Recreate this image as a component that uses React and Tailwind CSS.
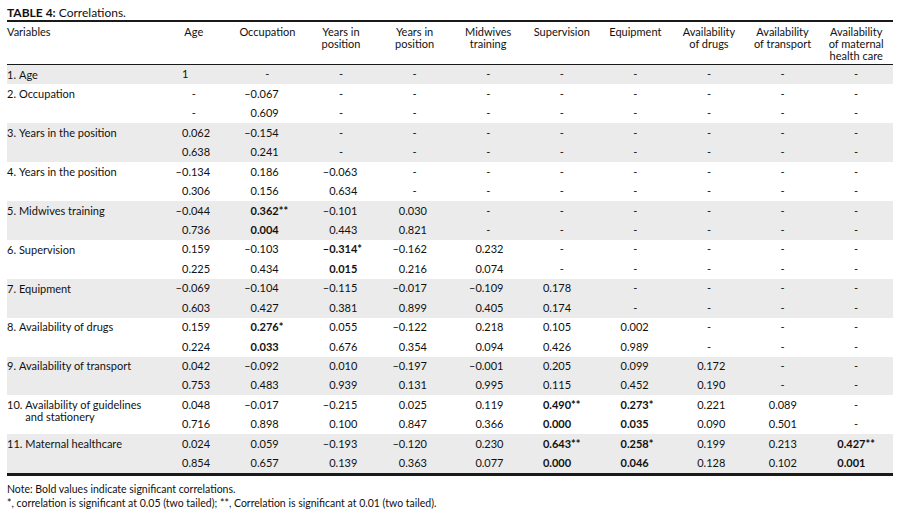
import React from "react";

const colPad = [
  "pl-[25px]",
  "pl-[20px]",
  "pl-[25px]",
  "pl-[21px]",
  "pl-[24px]",
  "pl-[18px]",
  "pl-[22px]",
  "pl-[25px]",
  "pl-[23px]",
  "pl-[18px]",
];

const headers = [
  ["Age"],
  ["Occupation"],
  ["Years in", "position"],
  ["Years in", "position"],
  ["Midwives", "training"],
  ["Supervision"],
  ["Equipment"],
  ["Availability", "of drugs"],
  ["Availability", "of transport"],
  ["Availability", "of maternal", "health care"],
];

const D = "-";

const rows = [
  { label: ["1.", "Age"], r: ["1", D, D, D, D, D, D, D, D, D] },
  {
    label: ["2.", "Occupation"],
    r: [D, "–0.067", D, D, D, D, D, D, D, D],
    p: [D, "0.609", D, D, D, D, D, D, D, D],
  },
  {
    label: ["3.", "Years in the position"],
    r: ["0.062", "–0.154", D, D, D, D, D, D, D, D],
    p: ["0.638", "0.241", D, D, D, D, D, D, D, D],
  },
  {
    label: ["4.", "Years in the position"],
    r: ["–0.134", "0.186", "–0.063", D, D, D, D, D, D, D],
    p: ["0.306", "0.156", "0.634", D, D, D, D, D, D, D],
  },
  {
    label: ["5.", "Midwives training"],
    r: ["–0.044", "0.362**|b", "–0.101", "0.030", D, D, D, D, D, D],
    p: ["0.736", "0.004|b", "0.443", "0.821", D, D, D, D, D, D],
  },
  {
    label: ["6.", "Supervision"],
    r: ["0.159", "–0.103", "–0.314*|b", "–0.162", "0.232", D, D, D, D, D],
    p: ["0.225", "0.434", "0.015|b", "0.216", "0.074", D, D, D, D, D],
  },
  {
    label: ["7.", "Equipment"],
    r: ["–0.069", "–0.104", "–0.115", "–0.017", "–0.109", "0.178", D, D, D, D],
    p: ["0.603", "0.427", "0.381", "0.899", "0.405", "0.174", D, D, D, D],
  },
  {
    label: ["8.", "Availability of drugs"],
    r: ["0.159", "0.276*|b", "0.055", "–0.122", "0.218", "0.105", "0.002", D, D, D],
    p: ["0.224", "0.033|b", "0.676", "0.354", "0.094", "0.426", "0.989", D, D, D],
  },
  {
    label: ["9.", "Availability of transport"],
    r: ["0.042", "–0.092", "0.010", "–0.197", "–0.001", "0.205", "0.099", "0.172", D, D],
    p: ["0.753", "0.483", "0.939", "0.131", "0.995", "0.115", "0.452", "0.190", D, D],
  },
  {
    label: ["10.", "Availability of guidelines", "and stationery"],
    r: ["0.048", "–0.017", "–0.215", "0.025", "0.119", "0.490**|b", "0.273*|b", "0.221", "0.089", D],
    p: ["0.716", "0.898", "0.100", "0.847", "0.366", "0.000|b", "0.035|b", "0.090", "0.501", D],
  },
  {
    label: ["11.", "Maternal healthcare"],
    r: ["0.024", "0.059", "–0.193", "–0.120", "0.230", "0.643**|b", "0.258*|b", "0.199", "0.213", "0.427**|b"],
    p: ["0.854", "0.657", "0.139", "0.363", "0.077", "0.000|b", "0.046|b", "0.128", "0.102", "0.001|b"],
  },
];

function Cell({ value, col }) {
  if (value === D) {
    return (
      <div className="flex h-[19.44px] items-center justify-center">-</div>
    );
  }
  const bold = value.endsWith("|b");
  const v = bold ? value.slice(0, -2) : value;
  const neg = v.startsWith("–");
  const body = neg ? v.slice(1) : v;
  return (
    <div
      className={`flex h-[19.44px] items-center ${colPad[col]} ${
        bold ? "font-bold" : ""
      }`}
    >
      {neg && (
        <span className="-ml-[7px] inline-block w-[7px] text-right">–</span>
      )}
      <span>{body}</span>
    </div>
  );
}

function Label({ label }) {
  const [num, ...lines] = label;
  return (
    <div className="flex pt-[3.7px] leading-[12px]">
      <span className="pr-[3px]">{num}</span>
      <span>
        {lines.map((l, i) => (
          <span key={i} className="block">
            {l}
          </span>
        ))}
      </span>
    </div>
  );
}

export default function App() {
  return (
    <div
      className="h-[515px] w-[904px] bg-white text-[11px] text-[#111]"
      style={{ fontFamily: "Lato, 'Open Sans', sans-serif" }}
    >
      <div className="px-[7px] pt-[6px]">
        <div className="h-[14px] text-[12px] leading-[14px]">
          <span className="font-bold">TABLE 4:</span> Correlations.
        </div>
        <div className="w-[886px] border-t-2 border-b-[3px] border-[#1a1a1a]">
          <div className="grid h-[43px] grid-cols-[150px_repeat(10,73.6px)] border-b border-[#1a1a1a] pt-[4px] leading-[12px]">
            <div>Variables</div>
            {headers.map((h, i) => (
              <div key={i} className="text-center">
                {h.map((l, j) => (
                  <div key={j}>{l}</div>
                ))}
              </div>
            ))}
          </div>
          {rows.map((row, ri) => (
            <div
              key={ri}
              className={`grid grid-cols-[150px_repeat(10,73.6px)] ${
                ri % 2 === 0 ? "bg-[#ebebeb]" : "bg-white"
              }`}
            >
              <div className={row.p ? "row-span-2" : ""}>
                <Label label={row.label} />
              </div>
              {row.r.map((v, ci) => (
                <Cell key={`r${ci}`} value={v} col={ci} />
              ))}
              {row.p &&
                row.p.map((v, ci) => <Cell key={`p${ci}`} value={v} col={ci} />)}
            </div>
          ))}
        </div>
        <div className="mt-[6px] text-[10.5px] leading-[14px]">
          <div>Note: Bold values indicate significant correlations.</div>
          <div>
            *, correlation is significant at 0.05 (two tailed); **, Correlation
            is significant at 0.01 (two tailed).
          </div>
        </div>
      </div>
    </div>
  );
}
